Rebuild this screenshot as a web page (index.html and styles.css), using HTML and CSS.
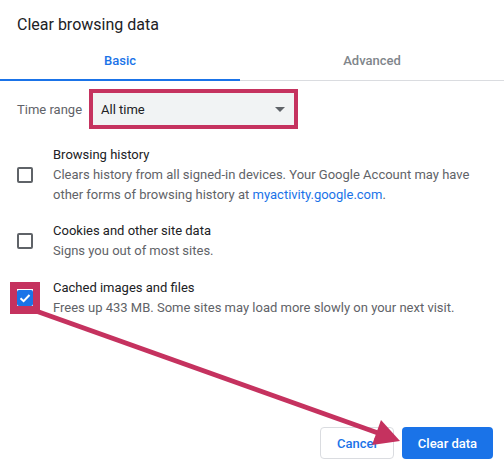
FILE: index.html
```html
<!DOCTYPE html>
<html>
<head>
<meta charset="utf-8">
<link rel="stylesheet" href="styles.css">
</head>
<body>
<div class="dialog">
  <div class="title">Clear browsing data</div>
  <div class="tabs">
    <div class="tab tab-basic active">Basic</div>
    <div class="tab tab-adv">Advanced</div>
  </div>
  <div class="range">
    <span class="range-label">Time range</span>
    <div class="select">
      <span>All time</span>
      <span class="caret"></span>
    </div>
  </div>
  <div class="options">
    <div class="option">
      <span class="box"></span>
      <div class="opt-text">
        <div class="opt-title">Browsing history</div>
        <div class="opt-desc">Clears history from all signed-in devices. Your Google Account may have other forms of browsing history at <span class="link">myactivity.google.com</span>.</div>
      </div>
    </div>
    <div class="option">
      <span class="box"></span>
      <div class="opt-text">
        <div class="opt-title">Cookies and other site data</div>
        <div class="opt-desc">Signs you out of most sites.</div>
      </div>
    </div>
    <div class="option">
      <span class="box checked"><svg width="16" height="16" viewBox="0 0 16 16"><polyline points="3.5,8.3 6.6,11.2 12.5,5" fill="none" stroke="#fff" stroke-width="2"/></svg></span>
      <div class="opt-text">
        <div class="opt-title">Cached images and files</div>
        <div class="opt-desc">Frees up 433 MB. Some sites may load more slowly on your next visit.</div>
      </div>
    </div>
  </div>
  <div class="footer">
    <button class="btn btn-cancel">Cancel</button>
    <button class="btn btn-primary">Clear data</button>
  </div>
  <div class="mark-box"></div>
  <svg class="arrow" width="504" height="472" viewBox="0 0 504 472">
    <line x1="36" y1="311" x2="378" y2="433" stroke="#c5325f" stroke-width="5"/>
    <polygon points="381,420 400,441 372,445" fill="#c5325f"/>
  </svg>
</div>
</body>
</html>
```

FILE: styles.css
```css
* { box-sizing: border-box; }
html, body { margin: 0; padding: 0; background: #fff; }
body {
  font-family: Roboto, "Liberation Sans", sans-serif;
  color: #202124;
}
.dialog {
  position: relative;
  width: 504px;
  height: 472px;
  display: flex;
  flex-direction: column;
  overflow: hidden;
}
.title {
  font-size: 16px;
  line-height: 20px;
  padding: 15px 17px 0;
  height: 42px;
}
.tabs {
  display: flex;
  height: 39px;
  border-bottom: 1px solid #dadce0;
}
.tab {
  font-size: 13px;
  font-weight: 500;
  display: flex;
  align-items: center;
  justify-content: center;
  height: 39px;
  padding-bottom: 2px;
}
.tab-basic { width: 240px; color: #1a73e8; }
.tab-adv { flex: 1; color: #80868b; }
.tab.active { border-bottom: 2px solid #1a73e8; padding-bottom: 0; }
.range {
  display: flex;
  align-items: center;
  padding: 12px 0 0 17px;
}
.range-label {
  font-size: 13px;
  color: #5f6368;
  width: 76px;
}
.select {
  width: 201px;
  height: 32px;
  background: #f1f3f4;
  outline: 4px solid #c5325f;
  display: flex;
  align-items: center;
  justify-content: space-between;
  padding: 0 9px 0 8px;
  font-size: 13px;
  color: #202124;
}
.caret {
  width: 0;
  height: 0;
  border-left: 5px solid transparent;
  border-right: 5px solid transparent;
  border-top: 5px solid #5f6368;
}
.options {
  display: flex;
  flex-direction: column;
  gap: 16px;
  padding-top: 20px;
}
.option {
  display: flex;
  align-items: center;
  padding-left: 17px;
}
.option:last-child { margin-top: 1px; }
.box {
  width: 16px;
  height: 16px;
  border: 2px solid #5f6368;
  border-radius: 2px;
  flex: none;
  margin-right: 20px;
}
.box.checked {
  background: #1a73e8;
  border: none;
}
.box.checked svg { display: block; }
.opt-text {
  font-size: 13px;
  line-height: 20px;
  width: 430px;
}
.opt-title { color: #202124; }
.opt-desc { color: #5f6368; }
.link { color: #1a73e8; }
.footer {
  margin-top: auto;
  display: flex;
  justify-content: flex-end;
  gap: 8px;
  padding: 0 11px 13px 0;
}
.btn {
  height: 32px;
  border-radius: 4px;
  font-family: Roboto, sans-serif;
  font-size: 13px;
  font-weight: 500;
  padding: 0;
}
.btn-cancel {
  width: 74px;
  background: #fff;
  border: 1px solid #dadce0;
  color: #1a73e8;
}
.btn-primary {
  width: 91px;
  background: #1a73e8;
  border: none;
  color: #fff;
}
.mark-box {
  position: absolute;
  left: 10px;
  top: 282px;
  width: 30px;
  height: 32px;
  border: 7px solid #c5325f;
  border-bottom-width: 8px;
}
.arrow {
  position: absolute;
  left: 0;
  top: 0;
  pointer-events: none;
}
```
